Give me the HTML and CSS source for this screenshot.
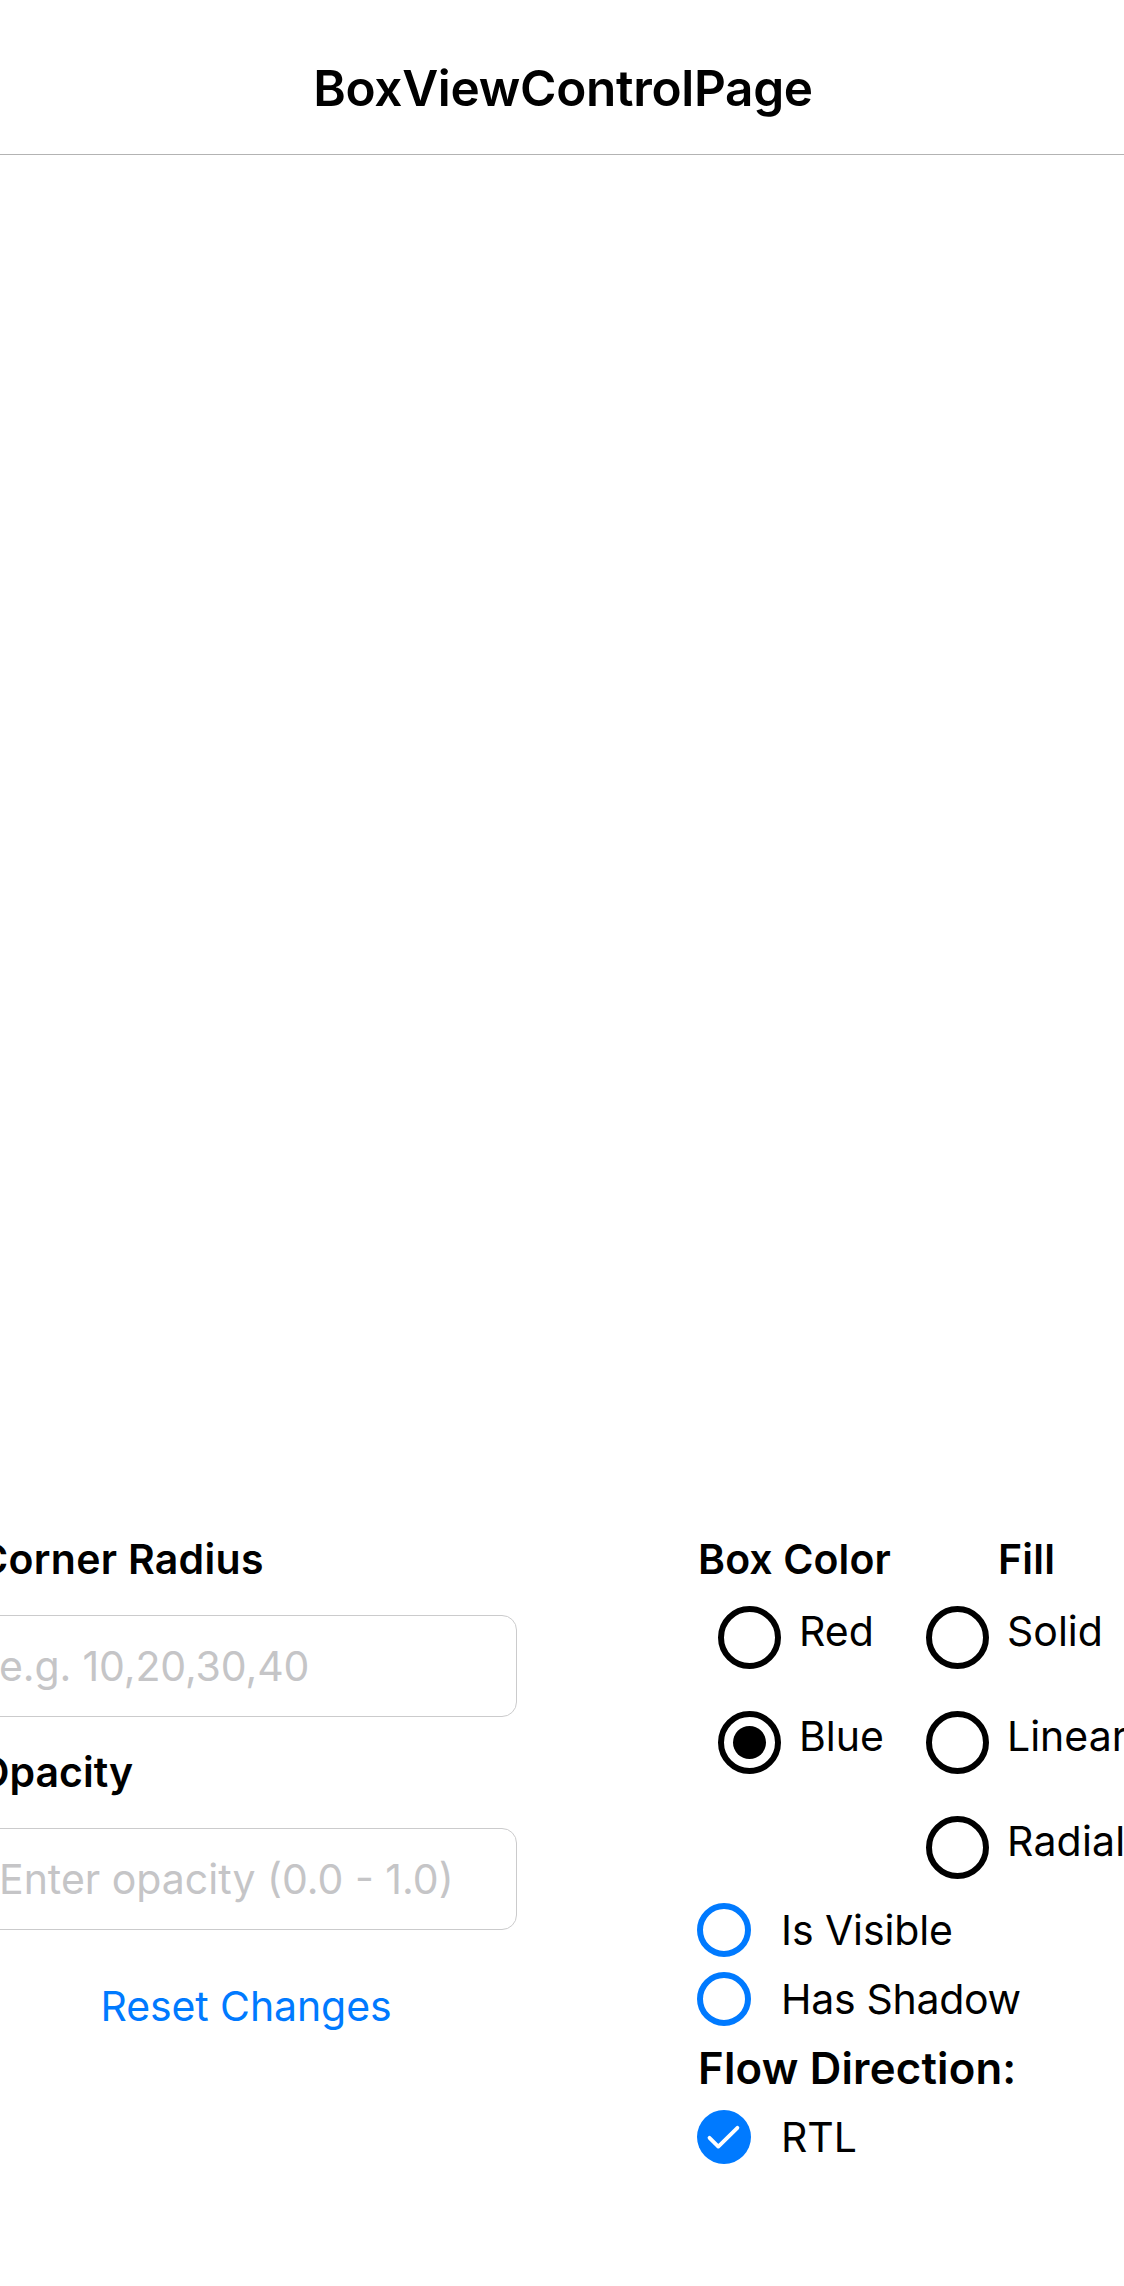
FILE: index.html
```
<!DOCTYPE html>
<html lang="en">
<head>
<meta charset="utf-8">
<title>BoxViewControlPage</title>
<link rel="stylesheet" href="styles.css">
</head>
<body>
<header class="navbar"><h1 class="title">BoxViewControlPage</h1></header>
<main class="page">
  <section class="inputs">
    <h2 class="heading spaced">Corner Radius</h2>
    <div class="field corner">e.g. 10,20,30,40</div>
    <h2 class="heading">Opacity</h2>
    <div class="field">Enter opacity (0.0 - 1.0)</div>
    <div class="reset">Reset Changes</div>
  </section>
  <section class="options">
    <div class="groups">
      <div class="group color">
        <h2 class="heading">Box Color</h2>
        <div class="radio">
          <svg class="ring" viewBox="0 0 63 63"><circle cx="31.5" cy="31.5" r="28.5"/></svg>
          <span>Red</span>
        </div>
        <div class="radio">
          <svg class="ring" viewBox="0 0 63 63"><circle cx="31.5" cy="31.5" r="28.5"/><circle class="dot" cx="31.5" cy="31.5" r="16.5"/></svg>
          <span>Blue</span>
        </div>
      </div>
      <div class="group fill">
        <h2 class="heading">Fill</h2>
        <div class="radio">
          <svg class="ring" viewBox="0 0 63 63"><circle cx="31.5" cy="31.5" r="28.5"/></svg>
          <span>Solid</span>
        </div>
        <div class="radio">
          <svg class="ring" viewBox="0 0 63 63"><circle cx="31.5" cy="31.5" r="28.5"/></svg>
          <span>Linear</span>
        </div>
        <div class="radio">
          <svg class="ring" viewBox="0 0 63 63"><circle cx="31.5" cy="31.5" r="28.5"/></svg>
          <span class="radial">Radial</span>
        </div>
      </div>
    </div>
    <div class="checks">
      <div class="check">
        <svg class="box" viewBox="0 0 54 54"><circle cx="27" cy="27" r="24"/></svg>
        <span>Is Visible</span>
      </div>
      <div class="check">
        <svg class="box" viewBox="0 0 54 54"><circle cx="27" cy="27" r="24"/></svg>
        <span class="shadow">Has Shadow</span>
      </div>
      <h2 class="flow">Flow Direction:</h2>
      <div class="check">
        <svg class="box" viewBox="0 0 54 54"><circle class="on" cx="27" cy="27" r="27"/><path d="M12.5 27.8 21.3 36.6 40.4 17.8"/></svg>
        <span>RTL</span>
      </div>
    </div>
  </section>
</main>
</body>
</html>
```
FILE: styles.css
```
* { box-sizing: border-box; }

html, body {
  margin: 0;
  overflow: hidden;
}

body {
  width: 1124px;
  height: 2286px;
  background: #fff;
  color: #000;
  font: 400 41px/50px Inter, sans-serif;
  white-space: nowrap;
}

h1, h2 { margin: 0; }

.navbar {
  height: 155px;
  padding: 58px 0 0 2px;
  border-bottom: 1px solid #b3b3b3;
  text-align: center;
}

.title {
  font-size: 49.5px;
  line-height: 60px;
  font-weight: 600;
  letter-spacing: -0.3px;
}

.page {
  display: flex;
  justify-content: space-between;
  padding-top: 1379px;
}

.heading {
  font-size: 41px;
  line-height: 50px;
  font-weight: 600;
}

.spaced { letter-spacing: 0.3px; }

.inputs {
  width: 539px;
  margin-left: -22px;
}

.field {
  height: 102px;
  margin: 31px 0 30px;
  padding: 25px 20px;
  border: 1px solid #cbcbcc;
  border-radius: 15px;
  color: #c5c5c7;
}

.corner { letter-spacing: -0.13px; }

.reset {
  margin-top: 51px;
  padding-right: 3px;
  color: #007aff;
  text-align: center;
  letter-spacing: -0.1px;
}

.options { width: 427px; }

.groups {
  display: grid;
  grid-template-columns: 208px 219px;
}

.group .heading { margin-bottom: 1px; }

.color .heading {
  padding-left: 1px;
  letter-spacing: 0.1px;
}

.fill .heading {
  padding-left: 93px;
  letter-spacing: 0.2px;
}

.radio {
  display: flex;
  gap: 18px;
  height: 105px;
  padding: 21px 0 0 21px;
}

.ring {
  flex: none;
  width: 63px;
  height: 63px;
  fill: none;
  stroke: #000;
  stroke-width: 6;
}

.dot {
  fill: #000;
  stroke: none;
}

.radial { letter-spacing: 0.2px; }

.checks {
  display: flex;
  flex-direction: column;
  gap: 15px;
  padding-top: 3px;
}

.check {
  display: flex;
  gap: 30px;
  height: 54px;
  line-height: 54px;
  letter-spacing: -0.1px;
}

.shadow { letter-spacing: -0.3px; }

.box {
  flex: none;
  width: 54px;
  height: 54px;
  fill: none;
  stroke: #007aff;
  stroke-width: 6;
}

.box .on {
  fill: #007aff;
  stroke: none;
}

.box path {
  stroke: #fff;
  stroke-width: 3.8;
  stroke-linecap: round;
  stroke-linejoin: round;
}

.flow {
  height: 54px;
  padding-left: 1px;
  font-size: 43.7px;
  line-height: 55px;
  font-weight: 600;
  letter-spacing: 0.2px;
}
```
